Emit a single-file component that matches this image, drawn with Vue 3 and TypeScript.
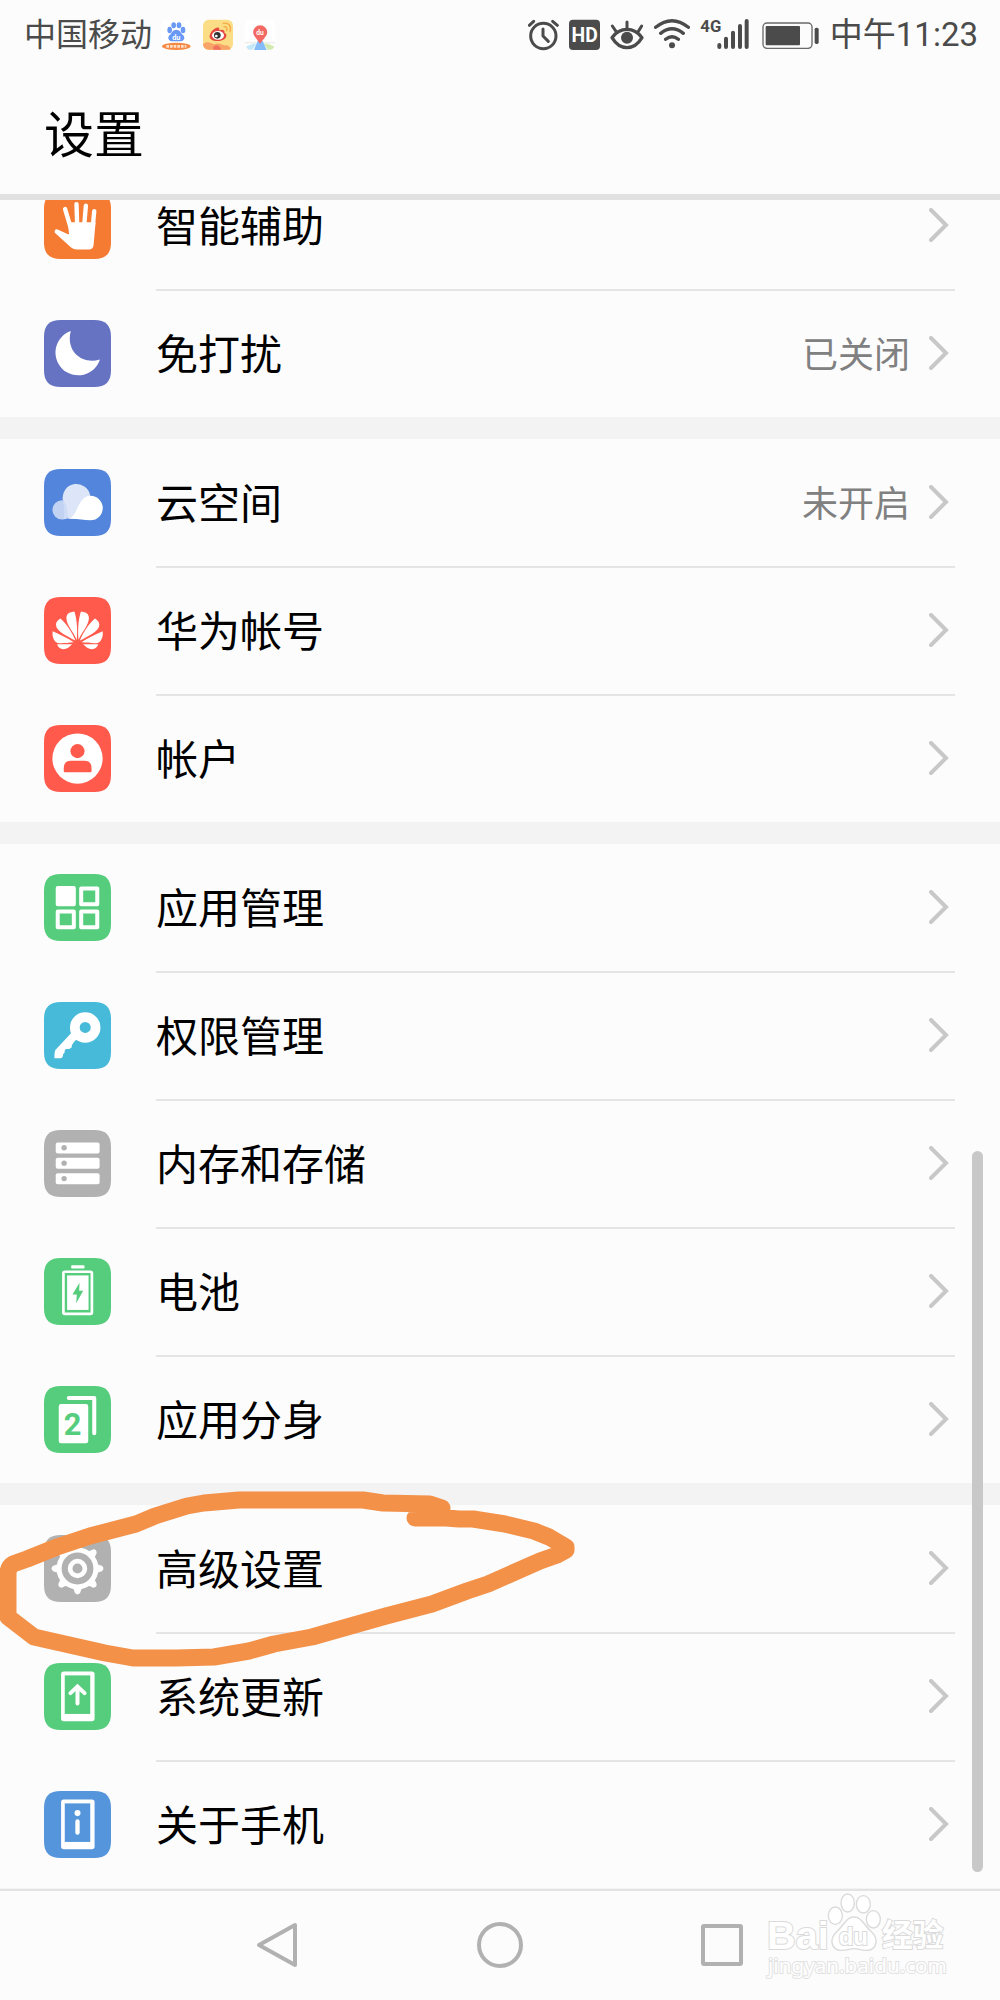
<script setup lang="ts">
type IconName =
  | 'hand' | 'moon' | 'cloud' | 'huawei' | 'account' | 'apps' | 'key'
  | 'storage' | 'battery' | 'twin' | 'gear' | 'update' | 'about'

interface Item {
  label: string
  icon: IconName
  value?: string
}

interface Group {
  id: string
  items: Item[]
  marked?: boolean
}

const tints: Record<IconName, string> = {
  hand: '#f57b32',
  moon: '#6673c2',
  cloud: '#5285db',
  huawei: '#ff5a4c',
  account: '#ff5a4c',
  apps: '#55cd7c',
  key: '#47bad9',
  storage: '#b1b1b1',
  battery: '#55cd7c',
  twin: '#55cd7c',
  gear: '#b1b1b1',
  update: '#55cd7c',
  about: '#5595db',
}

const groups: Group[] = [
  {
    id: 'assist',
    items: [
      { label: '智能辅助', icon: 'hand' },
      { label: '免打扰', icon: 'moon', value: '已关闭' },
    ],
  },
  {
    id: 'accounts',
    items: [
      { label: '云空间', icon: 'cloud', value: '未开启' },
      { label: '华为帐号', icon: 'huawei' },
      { label: '帐户', icon: 'account' },
    ],
  },
  {
    id: 'apps',
    items: [
      { label: '应用管理', icon: 'apps' },
      { label: '权限管理', icon: 'key' },
      { label: '内存和存储', icon: 'storage' },
      { label: '电池', icon: 'battery' },
      { label: '应用分身', icon: 'twin' },
    ],
  },
  {
    id: 'system',
    marked: true,
    items: [
      { label: '高级设置', icon: 'gear' },
      { label: '系统更新', icon: 'update' },
      { label: '关于手机', icon: 'about' },
    ],
  },
]

const teeth = [0, 45, 90, 135, 180, 225, 270, 315]
</script>

<template>
  <div class="phone">
    <div class="status">
      <span class="carrier">中国移动</span>
      <div class="notices">
        <svg width="30" height="32" viewBox="484 54 90 96">
          <rect x="484" y="56" width="90" height="92" rx="16" fill="#fff" />
          <g fill="#6a98f5">
            <ellipse cx="510" cy="87" rx="7" ry="10" />
            <ellipse cx="522" cy="73" rx="7" ry="9" />
            <ellipse cx="538" cy="73" rx="7" ry="9" />
            <ellipse cx="550" cy="87" rx="7" ry="10" />
            <path d="M530 86C542 86 544 98 551 103C558 112 552 122 541 121H519C508 122 502 112 509 103C516 98 518 86 530 86Z" />
          </g>
          <text x="530" y="116" text-anchor="middle" class="mini" font-size="22" fill="#fff">du</text>
          <ellipse cx="530" cy="136" rx="43" ry="11" fill="#f58a45" />
          <path d="M500 136H560" stroke="#ffe0c8" stroke-width="8" stroke-dasharray="8 3" />
        </svg>
        <svg width="30" height="32" viewBox="609 54 90 96">
          <rect x="609" y="56" width="90" height="91" rx="18" fill="#fbdd85" />
          <path d="M609 129C622 118 634 126 643 130C660 122 668 136 682 133C690 138 694 142 690 146H625C614 144 609 138 609 129Z" fill="#f8a468" />
          <path d="M640 138C650 128 658 134 664 146H640Z" fill="#f0705c" />
          <path d="M629 104C632 88 650 76 656 80C660 83 657 88 657 88C668 84 676 88 673 95C681 98 681 106 675 113C664 122 646 122 636 117C630 113 628 109 629 104Z" fill="#e5493f" />
          <ellipse cx="654" cy="103" rx="18" ry="13" fill="#fff" />
          <circle cx="652" cy="103" r="10" fill="#333" />
          <circle cx="649" cy="105" r="4" fill="#fff" />
          <path d="M672 77C680 76 683 83 680 89M670 67C686 63 695 76 690 92" fill="none" stroke="#f6ab48" stroke-width="4" stroke-linecap="round" />
        </svg>
        <svg width="30" height="32" viewBox="734 54 90 96">
          <rect x="734" y="56" width="90" height="92" rx="16" fill="#fff" />
          <path d="M734 122H824V128H734Z" fill="#f0f0ee" />
          <path d="M738 136L758 128H769L757 146H745Q738 144 738 136Z" fill="#c4e8f8" />
          <path d="M790 128H802L821 136Q821 144 812 146H802Z" fill="#d2eab0" />
          <path d="M772 120H787L799 147H761Z" fill="#84bcfa" />
          <path d="M779 128L766 110A21 21 0 1 1 793 110Z" fill="#f26a63" />
          <text x="779" y="101" text-anchor="middle" class="mini" font-size="20" fill="#fff">du</text>
        </svg>
      </div>
      <div class="signals">
        <svg width="31" height="36" viewBox="56 48 93 108" class="line">
          <circle cx="102" cy="105" r="38" stroke-width="9" />
          <path d="M101 84V105L117 121" stroke-width="9" />
          <path d="M60 73L73 61M130 61L144 73" stroke-width="9" />
        </svg>
        <svg width="31" height="36" viewBox="180 48 93 108">
          <rect x="180" y="56" width="93" height="91" rx="12" fill="#4b4b4b" />
          <text x="227" y="122" text-anchor="middle" class="hd" font-size="58" fill="#fff">HD</text>
        </svg>
        <svg width="34" height="36" viewBox="305 48 102 108" class="line">
          <path d="M311 110C335 77 377 77 401 110C377 150 335 150 311 110Z" stroke-width="10" />
          <circle cx="356" cy="110" r="18" fill="#4b4b4b" stroke="none" />
          <path d="M356 63V82M312 75L323 91M400 75L390 91" stroke-width="9" />
        </svg>
        <svg width="36" height="36" viewBox="433 48 108 108" class="line">
          <path d="M438 79Q487 39 536 79M453 97Q487 70 521 97M468 115Q487 99 506 115" stroke-width="10" />
          <circle cx="487" cy="133" r="9" fill="#4b4b4b" stroke="none" />
        </svg>
        <svg width="50" height="36" viewBox="568 48 150 108" class="line">
          <text x="569" y="94" class="narrow" font-size="50" fill="#4b4b4b" stroke="none">4G</text>
          <path d="M626 132V138M646 113V138M667 95V138M688 75V138M708 60V138" stroke-width="12" />
        </svg>
        <svg class="power" width="57" height="36" viewBox="757 48 171 108">
          <rect x="760" y="66" width="147" height="76" rx="12" fill="none" stroke="#6a6a6a" stroke-width="4" />
          <rect x="768" y="75" width="103" height="58" rx="3" fill="#4b4b4b" />
          <rect x="915" y="80" width="12" height="49" rx="5" fill="#4b4b4b" />
        </svg>
        <span class="time">中午11:23</span>
      </div>
    </div>

    <header class="header">
      <h1>设置</h1>
    </header>

    <main class="list">
      <section v-for="group in groups" :key="group.id" class="group">
        <button v-for="item in group.items" :key="item.label" type="button" class="row">
          <svg class="icon" viewBox="0 0 200 200" aria-hidden="true">
            <path
              d="M50 0H150C184 0 200 16 200 50V150C200 184 184 200 150 200H50C16 200 0 184 0 150V50C0 16 16 0 50 0Z"
              :fill="tints[item.icon]"
            />
            <g v-if="item.icon === 'hand'" fill="#fff" stroke="#fff" stroke-linecap="round">
              <path d="M63 51L79 105M97 36L99 100M125 41L120 100M150 57L145 110" stroke-width="13" fill="none" />
              <path d="M38 118L74 134" stroke-width="13" />
              <path d="M71 90L75 127L34 123L80 165Q88 172 98 172H134Q147 171 148 158L154 90Z" stroke="none" />
            </g>
            <path v-else-if="item.icon === 'moon'" d="M80 33A68 68 0 1 0 167 118C112 135 64 92 80 33Z" fill="#fff" />
            <g v-else-if="item.icon === 'cloud'">
              <circle cx="54" cy="122" r="29" fill="#c2d2f3" />
              <path d="M56 92A41 41 0 0 1 138 80L110 148H70C70 125 66 105 56 92Z" fill="#dde6f8" />
              <path d="M56 94C67 105 72 122 69 148L58 150C62 130 60 110 56 94Z" fill="#cfdcf6" />
              <path d="M70 149C102 146 99 80 139 80A36 36 0 0 1 139 153C115 153 95 146 70 149Z" fill="#fff" />
            </g>
            <g v-else-if="item.icon === 'huawei'" fill="#fff">
              <g v-for="side in ['left', 'right']" :key="side" :transform="side === 'right' ? 'translate(201 0) scale(-1 1)' : undefined">
                <path d="M98 128C88 105 66 82 67 62C67 50 77 44 91 44C97 62 101 90 98 128Z" />
                <path d="M49 64C66 79 83 103 94 130C68 116 37 102 36 84C35 75 42 68 49 64Z" />
                <path d="M26 102C47 112 72 123 89 135C68 137 50 139 41 137C27 132 24 113 26 102Z" />
                <path d="M39 141H84C77 148 68 156 58 156C48 156 42 149 39 141Z" />
              </g>
            </g>
            <g v-else-if="item.icon === 'account'">
              <circle cx="100" cy="100" r="75" fill="#fff" />
              <circle cx="100" cy="78" r="21" fill="#ff5a4c" />
              <path d="M59 130Q59 107 80 107H121Q142 107 142 130V137Q142 141 138 141H63Q59 141 59 137Z" fill="#ff5a4c" />
            </g>
            <g v-else-if="item.icon === 'apps'" fill="none" stroke="#fff" stroke-width="12" stroke-linejoin="round">
              <rect x="41" y="42" width="48" height="48" fill="#fff" />
              <rect x="111" y="43" width="48" height="47" />
              <rect x="41" y="112" width="48" height="47" />
              <rect x="111" y="112" width="48" height="47" />
            </g>
            <g v-else-if="item.icon === 'key'">
              <circle cx="123" cy="76" r="31" fill="none" stroke="#fff" stroke-width="29" />
              <path d="M82 92L34 143Q31 148 31 168H49Q57 167 57 156L62 150Q60 141 68 140H75Q85 137 83 129Q88 120 99 110Z" fill="#fff" />
            </g>
            <g v-else-if="item.icon === 'storage'">
              <g v-for="y in [37, 83, 129]" :key="y">
                <rect x="35" :y="y" width="131" height="33" rx="6" fill="#fff" />
                <circle cx="60" :cy="y + 16" r="8" fill="#b1b1b1" />
              </g>
            </g>
            <g v-else-if="item.icon === 'battery'">
              <rect x="81" y="22" width="40" height="9" rx="3" fill="#fff" />
              <rect x="58" y="41" width="85" height="126" rx="4" fill="none" stroke="#fff" stroke-width="8" />
              <rect x="69" y="52" width="64" height="103" fill="#fff" />
              <path d="M106 74L85 109H98L96 135L117 98H105Z" fill="#55cd7c" />
            </g>
            <g v-else-if="item.icon === 'twin'">
              <path d="M74 36H150V141" fill="none" stroke="#fff" stroke-width="12" stroke-linejoin="round" stroke-linecap="round" />
              <rect x="40" y="50" width="98" height="125" rx="8" fill="#55cd7c" />
              <rect x="44" y="54" width="88" height="117" rx="7" fill="#fff" />
              <text x="85" y="145" text-anchor="middle" class="two" font-size="92" fill="#55cd7c">2</text>
            </g>
            <g v-else-if="item.icon === 'gear'">
              <path
                v-for="angle in teeth"
                :key="angle"
                d="M89 42L94 28Q100 21 106 28L111 42Z"
                fill="#fff"
                stroke="#fff"
                stroke-width="4"
                stroke-linejoin="round"
                :transform="`rotate(${angle} 100 100)`"
              />
              <circle cx="100" cy="100" r="55" fill="none" stroke="#fff" stroke-width="15" />
              <circle cx="100" cy="100" r="22" fill="none" stroke="#fff" stroke-width="14" />
            </g>
            <g v-else>
              <rect x="51" y="25" width="100" height="149" rx="8" fill="#fff" />
              <rect x="62" y="37" width="76" height="115" :fill="tints[item.icon]" />
              <path
                v-if="item.icon === 'update'"
                d="M100 121V71M79 90L100 70L121 90"
                fill="none"
                stroke="#fff"
                stroke-width="12"
                stroke-linecap="round"
              />
              <g v-else>
                <circle cx="100" cy="66" r="9" fill="#fff" />
                <path d="M100 91V124" stroke="#fff" stroke-width="13" stroke-linecap="round" />
              </g>
            </g>
          </svg>
          <span class="body">
            <span class="label">{{ item.label }}</span>
            <span v-if="item.value" class="value">{{ item.value }}</span>
            <svg class="chevron" width="20" height="36" viewBox="0 0 20 36" aria-hidden="true">
              <path d="M2 2L17 17L2 32" />
            </svg>
          </span>
        </button>
        <svg v-if="group.marked" class="marker" width="600" height="200" viewBox="0 1480 600 200" aria-hidden="true">
          <path
            d="M442 1508L430 1504L383 1503L363 1500H239L204 1503L187 1506L155 1516L136 1524L90 1536L57 1547L27 1559L13 1564Q8 1567 8 1574V1617L34 1637L105 1653L133 1658H176L214 1657L249 1651L274 1644L312 1637L333 1631L386 1616L432 1604L467 1591L488 1584L540 1561L557 1555L566 1550V1547L549 1537L534 1531L505 1524L473 1519H459L446 1518H415"
          />
        </svg>
      </section>
      <div class="thumb"></div>
    </main>

    <nav class="nav">
      <button type="button" aria-label="返回">
        <svg width="48" height="48" viewBox="0 0 48 48"><path d="M5 24L41 4V44Z" /></svg>
      </button>
      <button type="button" aria-label="主页">
        <svg width="48" height="48" viewBox="0 0 48 48"><circle cx="24" cy="24" r="21" /></svg>
      </button>
      <button type="button" aria-label="最近任务">
        <svg width="48" height="48" viewBox="0 0 48 48"><rect x="5" y="5" width="38" height="38" rx="1" /></svg>
      </button>
      <svg class="watermark" width="184" height="88" viewBox="195 95 552 264">
        <g fill="#fff" stroke="#dadada" stroke-width="4">
          <ellipse cx="406" cy="166" rx="21" ry="26" />
          <ellipse cx="443" cy="128" rx="20" ry="27" />
          <ellipse cx="490" cy="132" rx="21" ry="26" />
          <ellipse cx="520" cy="177" rx="21" ry="26" />
          <path d="M462 170C486 170 492 196 514 214C538 236 530 270 500 270C480 270 475 265 462 265C449 265 444 270 424 270C394 270 386 236 410 214C432 196 438 170 462 170Z" />
          <g class="brand">
            <text x="201" y="266" font-size="119">Bai</text>
            <text x="416" y="253" font-size="72">du</text>
            <text x="546" y="256" font-size="92" class="cjk">经验</text>
          </g>
          <text x="204" y="338" font-size="62" class="site">jingyan.baidu.com</text>
        </g>
      </svg>
    </nav>
  </div>
</template>

<style>
body {
  background: #fcfcfc;
}
</style>

<style scoped>
.phone {
  display: flex;
  flex-direction: column;
  min-height: 100vh;
  background: #fcfcfc;
  color: #000;
  font-family: Roboto, "Noto Sans CJK SC", sans-serif;
}

.status {
  display: flex;
  align-items: center;
  height: 66px;
  padding: 2px 22px 0 24px;
  color: #4b4b4b;
  font-size: 33px;
  line-height: 40px;
}

.carrier {
  font-size: 32px;
}

.notices {
  display: flex;
  gap: 12px;
  margin-left: 9px;
}

.signals {
  display: flex;
  align-items: center;
  gap: 10px;
  margin-left: auto;
}

.power {
  margin: 0 1px 0 2px;
}

.line {
  fill: none;
  stroke: #4b4b4b;
  stroke-linecap: round;
  stroke-linejoin: round;
}

.mini,
.hd,
.two {
  font-family: Roboto, sans-serif;
  font-weight: 700;
}

.narrow {
  font-family: "Liberation Sans Narrow", Roboto, sans-serif;
  font-weight: 700;
}

.header {
  display: flex;
  align-items: center;
  height: 116px;
  padding: 10px 44px 0;
  border-bottom: 6px solid #e1e1e1;
}

h1 {
  margin: 0;
  font-size: 50px;
  line-height: 60px;
  font-weight: 400;
}

.list {
  position: relative;
  flex: 1;
  display: flex;
  flex-direction: column;
  gap: 22px;
  overflow: hidden;
  background: #f3f3f3;
}

.group {
  position: relative;
  padding-top: 1px;
  background: #fcfcfc;
}

.group:first-child {
  margin-top: -38px;
}

.row {
  display: flex;
  align-items: flex-start;
  width: 100%;
  padding: 0 45px 0 44px;
  border: 0;
  background: none;
  color: inherit;
  font: inherit;
  text-align: left;
}

.icon {
  flex: none;
  width: 67px;
  height: 67px;
  margin: 29px 45px 0 0;
}

.body {
  display: flex;
  flex: 1;
  align-items: center;
  height: 126px;
  padding-right: 6px;
  border-bottom: 2px solid #e5e5e5;
}

.row:last-of-type .body {
  border-bottom: 0;
}

.label {
  flex: 1;
  padding-top: 4px;
  font-size: 42px;
  line-height: 50px;
}

.value {
  margin-right: 19px;
  padding-top: 4px;
  color: #808080;
  font-size: 36px;
  line-height: 42px;
}

.chevron {
  fill: none;
  stroke: #c8c8c8;
  stroke-width: 4;
  stroke-linecap: round;
}

.marker {
  position: absolute;
  top: -25px;
  left: 0;
  z-index: 1;
  fill: none;
  stroke: #f39149;
  stroke-width: 17;
  stroke-linejoin: round;
  stroke-linecap: round;
  pointer-events: none;
}

.thumb {
  position: absolute;
  top: 951px;
  right: 17px;
  bottom: 17px;
  width: 11px;
  border-radius: 6px;
  background: #c8c8c8;
}

.nav {
  position: relative;
  display: flex;
  justify-content: center;
  height: 109px;
  border-top: 2px solid #e3e3e3;
}

.nav button {
  display: flex;
  align-items: center;
  justify-content: center;
  width: 222px;
  padding: 0 0 2px;
  border: 0;
  background: none;
}

.nav button svg {
  fill: none;
  stroke: #b1b1b1;
  stroke-width: 4;
  stroke-linejoin: round;
}

.watermark {
  position: absolute;
  top: 1px;
  right: 51px;
}

.watermark text {
  paint-order: stroke;
  stroke-width: 6;
}

.brand {
  font-family: "Liberation Sans", sans-serif;
  font-weight: 700;
}

.cjk {
  font-family: "Noto Sans CJK SC", sans-serif;
}

.site {
  font-family: "Noto Sans", sans-serif;
  stroke: #e2e2e2;
}
</style>
